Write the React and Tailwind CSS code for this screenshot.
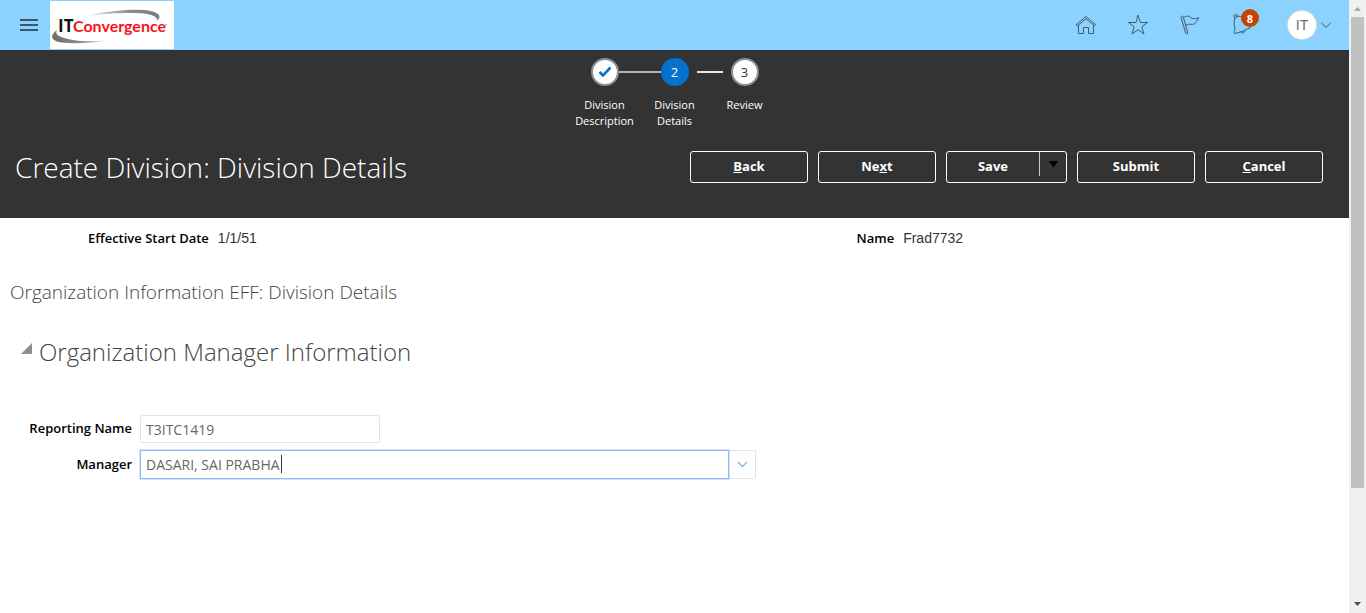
import React from "react";

const steps = [
  { label: "Division Description", mark: "check", left: "w-[21px]", right: "w-[21px] bg-[#a9b4bf]" },
  { label: "Division Details", mark: "2", left: "w-[21px] bg-[#a9b4bf]", right: "ml-2 w-[13px] bg-[#e6e6e6]" },
  { label: "Review", mark: "3", left: "mr-2 w-[13px] bg-[#e6e6e6]", right: "w-[21px]" },
];

const stroke = { fill: "none", stroke: "#3f5b6d", strokeWidth: 1, strokeLinejoin: "round", strokeLinecap: "round" };

function Logo() {
  return (
    <svg width="124" height="48" viewBox="0 0 124 48" role="img" aria-label="IT Convergence">
      <defs>
        <linearGradient id="top" x1="0" x2="1">
          <stop offset="0" stopColor="#e4e4e4" />
          <stop offset="0.6" stopColor="#8f8d8b" />
          <stop offset="1" stopColor="#7d7b79" />
        </linearGradient>
        <linearGradient id="bottom" x1="0" x2="1">
          <stop offset="0" stopColor="#6f6d6b" />
          <stop offset="0.5" stopColor="#8f8d8b" />
          <stop offset="1" stopColor="#f0f0f0" />
        </linearGradient>
      </defs>
      <rect width="124" height="48" fill="#fff" />
      <path d="M36 15C58 10 76 8.500 90 8.800C102 9.200 110 12 109.500 16.500L107.500 19.500C107 15 101 12.800 90 12.200C76 11.600 58 12 36 15Z" fill="url(#top)" />
      <path d="M7 29C0 34 0 40 12 41.500C26 43 42 42 58 39.500C42 40.500 28 40.500 18 38C7 35.500 5 33 7 29Z" fill="url(#bottom)" />
      <text x="8" y="31" fontFamily="Open Sans, sans-serif" fontWeight="700" fontSize="17" fill="#111">IT</text>
      <text x="23" y="31" fontFamily="Lato, sans-serif" fontWeight="700" fontSize="16" fill="#f5141c">Convergence</text>
      <circle cx="116" cy="24" r="0.800" fill="#777" />
    </svg>
  );
}

function Header() {
  return (
    <header className="flex h-[50px] items-center bg-[#8cd2ff] pr-[17px]">
      <button aria-label="Menu" className="flex h-full w-[50px] items-center justify-end pr-3">
        <svg width="18" height="14" viewBox="0 0 18 14" fill="#3b5566">
          <path d="M0 1h18v2H0zM0 6h18v2H0zM0 11h18v2H0z" />
        </svg>
      </button>
      <Logo />
      <nav className="ml-auto flex items-center">
        <button aria-label="Home" className="flex w-[52px] justify-center">
          <svg width="22" height="22" viewBox="0 0 22 22" {...stroke}>
            <path d="M1.500 10.500L11 2.500L20.500 10.500L19.500 11.800L11 4.800L2.500 11.800Z" />
            <path d="M3.500 11.500V19.500H8.500V13.500H13.500V19.500H18.500V11.500" />
          </svg>
        </button>
        <button aria-label="Favorites" className="flex w-[52px] justify-center">
          <svg width="22" height="22" viewBox="0 0 22 22" {...stroke}>
            <path d="M11 1.500L13.400 8.500H20.500L14.800 12.900L17 20L11 15.700L5 20L7.200 12.900L1.500 8.500H8.600Z" />
          </svg>
        </button>
        <button aria-label="Watchlist" className="flex w-[52px] justify-center">
          <svg width="22" height="22" viewBox="0 0 22 22" {...stroke}>
            <path d="M2 3.300C1.600 2 3.600 1.400 4.200 2.700L8.800 19C9 20 7.100 20.500 6.800 19.500Z" />
            <path d="M4.600 3.600C8 1.200 10 2 12 3.700C14.500 5.500 17 5 19.800 3.700C18.500 6 17.500 8.500 15.500 9.700C12 11.600 10.500 8.500 6.900 11.500" />
          </svg>
        </button>
        <button aria-label="Notifications, 8 unread" className="relative flex w-[52px] justify-center">
          <svg width="22" height="22" viewBox="0 0 22 22" {...stroke}>
            <circle cx="4.500" cy="2" r="1.600" />
            <path d="M6 2.500C11 1.500 14 4 15.500 8C16.500 10.500 17.500 12 19.500 13.500L12.500 17L4 19.500C2.800 19.500 2.800 18 3.600 16.500C4.600 14 3 11.500 3 9C3 7 4 5.500 4 3.600" />
            <path d="M9.800 18C11 20 14 19 13.800 16.600" />
          </svg>
          <span className="absolute -top-[5px] right-[9px] flex size-[18px] items-center justify-center rounded-full bg-[#c74200] font-['Open_Sans',sans-serif] text-[11px] leading-none font-bold text-white">
            8
          </span>
        </button>
        <button aria-label="Account" className="ml-5 flex items-center gap-1">
          <span className="flex size-7 items-center justify-center rounded-full bg-white font-['Liberation_Sans',sans-serif] text-sm text-[#6b6b6b] ring-1 ring-[#d5dde2]">
            IT
          </span>
          <svg width="12" height="8" viewBox="0 0 12 8" {...stroke}>
            <path d="M1.500 2L6 6.500L10.500 2" />
          </svg>
        </button>
      </nav>
    </header>
  );
}

function Step({ step }) {
  const circle =
    step.mark === "2"
      ? "bg-[#0572ce] text-white"
      : "border-2 border-[#8b9095] bg-white text-[#333]";
  return (
    <li className="flex w-[70px] flex-col items-center">
      <div className="flex w-full items-center">
        <span className={`h-[2px] ${step.left}`} />
        <span className={`flex size-7 items-center justify-center rounded-full text-[13px] leading-none ${circle}`}>
          {step.mark === "check" ? (
            <svg width="14" height="12" viewBox="0 0 14 12" fill="none" stroke="#0572ce" strokeWidth="2.600">
              <path d="M1.500 6L5 9.500L12.500 1.500" />
            </svg>
          ) : (
            step.mark
          )}
        </span>
        <span className={`h-[2px] ${step.right}`} />
      </div>
      <span className="mt-[11px] px-1 text-center text-[11px] leading-4 text-white">{step.label}</span>
    </li>
  );
}

const buttonClass =
  "h-8 w-[118px] rounded-[3px] border border-white text-[13px] font-bold text-white";

function Banner() {
  return (
    <section className="h-[168px] bg-[#333] pt-2">
      <ol className="flex justify-center">
        {steps.map((s) => (
          <Step key={s.label} step={s} />
        ))}
      </ol>
      <div className="mt-5 flex items-center justify-between pr-[26px] pl-[15px]">
        <h1 className="text-[28px] leading-9 font-light text-white">Create Division: Division Details</h1>
        <div className="flex gap-[10px]">
          <button className={buttonClass}><u>B</u>ack</button>
          <button className={buttonClass}>Ne<u>x</u>t</button>
          <div className="flex h-8 w-[121px] rounded-[3px] border border-white">
            <button className="flex-1 text-[13px] font-bold text-white">Save</button>
            <button aria-label="More save options" className="mb-1.5 flex w-[27px] justify-center border-l border-[#c4ced7] pt-[9px]">
              <svg width="9" height="7" viewBox="0 0 9 7">
                <path d="M0 0H9L4.500 6.500Z" fill="#000" />
              </svg>
            </button>
          </div>
          <button className={buttonClass}>Submit</button>
          <button className={buttonClass}><u>C</u>ancel</button>
        </div>
      </div>
    </section>
  );
}

function Details() {
  return (
    <section>
      <dl className="grid grid-cols-2 pt-[10px] text-[13px] leading-5">
        <div className="flex gap-[9px] pl-[88px]">
          <dt className="font-semibold text-black">Effective Start Date</dt>
          <dd className="font-['Liberation_Sans',sans-serif] text-sm leading-5 text-[#333]">1/1/51</dd>
        </div>
        <div className="flex gap-[9px] pl-[182px]">
          <dt className="font-semibold text-black">Name</dt>
          <dd className="font-['Liberation_Sans',sans-serif] text-sm leading-5 text-[#333]">Frad7732</dd>
        </div>
      </dl>
      <h2 className="mt-8 pl-[10px] text-[19px] leading-6 font-light text-[#444]">
        Organization Information EFF: Division Details
      </h2>
      <div className="mt-8 flex items-center pl-5">
        <button aria-label="Collapse section" className="mb-2 w-[19px]">
          <svg width="12" height="12" viewBox="0 0 12 12">
            <path d="M12 1V12H1Z" fill="#8a8f94" />
          </svg>
        </button>
        <h3 className="text-2xl leading-8 font-light text-[#444]">Organization Manager Information</h3>
      </div>
      <form className="mt-[47px] grid grid-cols-[132px_1fr] items-center gap-x-2 gap-y-[7px] text-[13px]">
        <label htmlFor="reporting" className="text-right font-semibold text-black">Reporting Name</label>
        <input
          id="reporting"
          defaultValue="T3ITC1419"
          className="h-7 w-60 rounded-[2px] border border-[#dfe4e7] px-[5px] text-sm text-[#666] outline-none"
        />
        <label htmlFor="manager" className="text-right font-semibold text-black">Manager</label>
        <div className="flex w-[616px]">
          <div className="relative flex-1">
            <input
              id="manager"
              defaultValue="DASARI, SAI PRABHA"
              className="h-[29px] w-full border border-[#94b9f5] px-[5px] text-sm text-[#666] ring-1 ring-[#94b9f5]/40 outline-none"
            />
            <span className="absolute top-[5px] left-[141px] h-[18px] w-px bg-[#333]" />
          </div>
          <button type="button" aria-label="Show managers" className="flex h-[29px] w-[27px] items-center justify-center rounded-r-[2px] border border-l-0 border-[#dfe4e7]">
            <svg width="11" height="7" viewBox="0 0 11 7" fill="none" stroke="#7ab8e8" strokeWidth="1.300">
              <path d="M1 1L5.500 5.500L10 1" />
            </svg>
          </button>
        </div>
      </form>
    </section>
  );
}

function ScrollBar() {
  return (
    <div aria-hidden="true" className="flex w-[17px] flex-col items-center bg-[#f0f0f0]">
      <svg width="7" height="17" viewBox="0 0 7 17" fill="#a3a3a3">
        <path d="M3.500 7L7 11H0Z" />
      </svg>
      <div className="h-[471px] w-[13px] bg-[#c1c1c1]" />
      <svg className="mt-auto" width="7" height="17" viewBox="0 0 7 17" fill="#505050">
        <path d="M0 6H7L3.500 10Z" />
      </svg>
    </div>
  );
}

export default function App() {
  return (
    <div className="flex min-h-screen bg-white font-['Open_Sans','Noto_Sans',sans-serif]">
      <main className="min-w-0 flex-1">
        <Header />
        <Banner />
        <Details />
      </main>
      <ScrollBar />
    </div>
  );
}
